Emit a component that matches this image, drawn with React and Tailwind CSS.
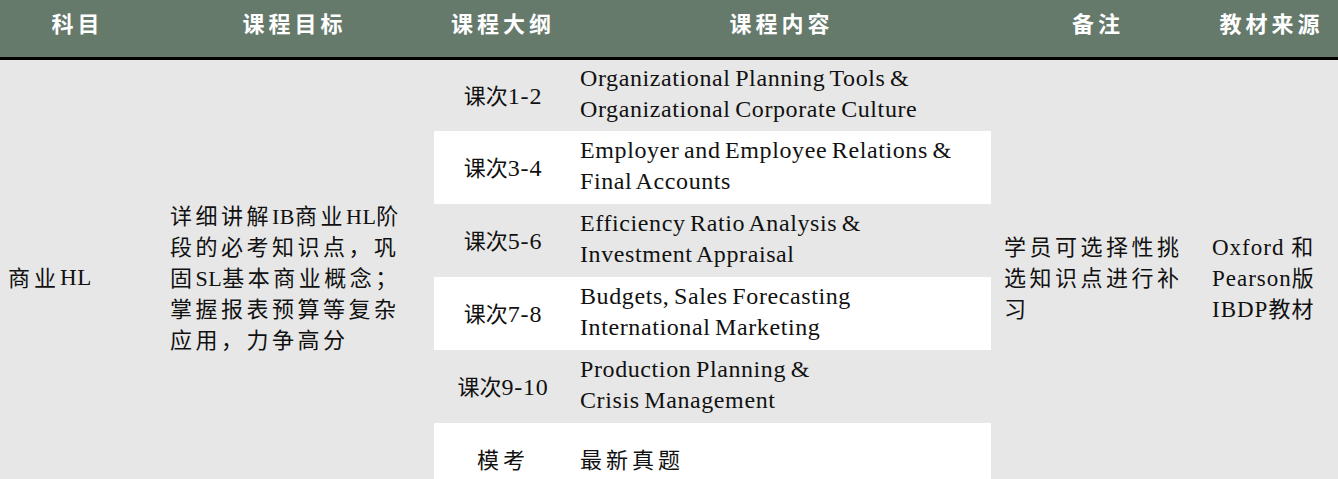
import React from "react";

const cjk = { fontFamily: '"Liberation Serif", "Noto Sans CJK SC", serif' };

const rows = [
  { label: "课次", num: "1-2", lines: ["Organizational Planning Tools &", "Organizational Corporate Culture"], white: false },
  { label: "课次", num: "3-4", lines: ["Employer and Employee Relations &", "Final Accounts"], white: true },
  { label: "课次", num: "5-6", lines: ["Efficiency Ratio Analysis &", "Investment Appraisal"], white: false },
  { label: "课次", num: "7-8", lines: ["Budgets, Sales Forecasting", "International Marketing"], white: true },
  { label: "课次", num: "9-10", lines: ["Production Planning &", "Crisis Management"], white: false },
  { label: "模考", num: "", lines: ["最新真题"], white: true, cjkOnly: true },
];

const L = ({ children }) => <span className="tracking-[0.5px]">{children}</span>;

export default function App() {
  const headers = ["科目", "课程目标", "课程大纲", "课程内容", "备注", "教材来源"];
  return (
    <div className="w-[1338px] h-[479px] overflow-hidden bg-[#e7e7e7] text-[#111]" style={cjk}>
      <div className="grid grid-cols-[155px_279px_138px_419px_214px_133px] h-[60px] bg-[#667a6c] border-b-[3px] border-black">
        {headers.map((h) => (
          <div key={h} className="flex items-center justify-center pb-[13px] text-white font-bold text-[22px] tracking-[4px]" style={{ fontFamily: '"Noto Sans CJK SC", sans-serif' }}>
            {h}
          </div>
        ))}
      </div>
      <div className="grid grid-cols-[155px_279px_138px_419px_214px_133px] grid-rows-[71px_73px_73px_73px_73px_73px]">
        <div className="row-span-6 col-start-1 row-start-1 flex items-center pl-[8px] text-[22px] tracking-[4px]">
          <span>商业</span><span className="text-[23px] tracking-[0.5px]">HL</span>
        </div>
        <div className="row-span-6 col-start-2 row-start-1 flex items-center pl-[15px] text-[22px] leading-[31px] tracking-[3.5px] whitespace-nowrap">
          <div>
            详细讲解<L>IB</L>商业<L>HL</L>阶<br />段的必考知识点，巩<br />固<L>SL</L>基本商业概念；<br />掌握报表预算等复杂<br />应用，力争高分
          </div>
        </div>
        {rows.map((r, i) => (
          <React.Fragment key={r.label + r.num}>
            <div className={`col-start-3 flex items-center justify-center text-[22px] ${r.white ? "bg-white" : ""}`} style={{ gridRowStart: i + 1 }}>
              {r.cjkOnly ? (
                <span className="tracking-[4px] pt-[2px]">{r.label}</span>
              ) : (
                <span>
                  {r.label}
                  <span className="text-[24px] tracking-[0.8px]">{r.num}</span>
                </span>
              )}
            </div>
            <div className={`col-start-4 flex flex-col justify-center pl-[8px] pb-[3px] text-[24px] leading-[31px] whitespace-nowrap ${r.white ? "bg-white" : ""}`} style={{ gridRowStart: i + 1 }}>
              {r.lines.map((l) => (
                <div key={l} className={r.cjkOnly ? "text-[22px] tracking-[4px] pt-[4px]" : "tracking-[0.6px] [word-spacing:-2px]"}>{l}</div>
              ))}
            </div>
          </React.Fragment>
        ))}
        <div className="row-span-6 col-start-5 row-start-1 flex items-center pl-[13px] text-[22px] leading-[31px] tracking-[3.5px] whitespace-nowrap">
          <div>
            学员可选择性挑<br />选知识点进行补<br />习
          </div>
        </div>
        <div className="row-span-6 col-start-6 row-start-1 flex items-center pl-[7px] text-[22px] leading-[31px] whitespace-nowrap">
          <div className="tracking-[1px]">
            <span className="text-[23px]">Oxford </span>和<br />
            <span className="text-[23px]">Pearson</span>版<br />
            <span className="text-[23px]">IBDP</span>教材
          </div>
        </div>
      </div>
    </div>
  );
}
